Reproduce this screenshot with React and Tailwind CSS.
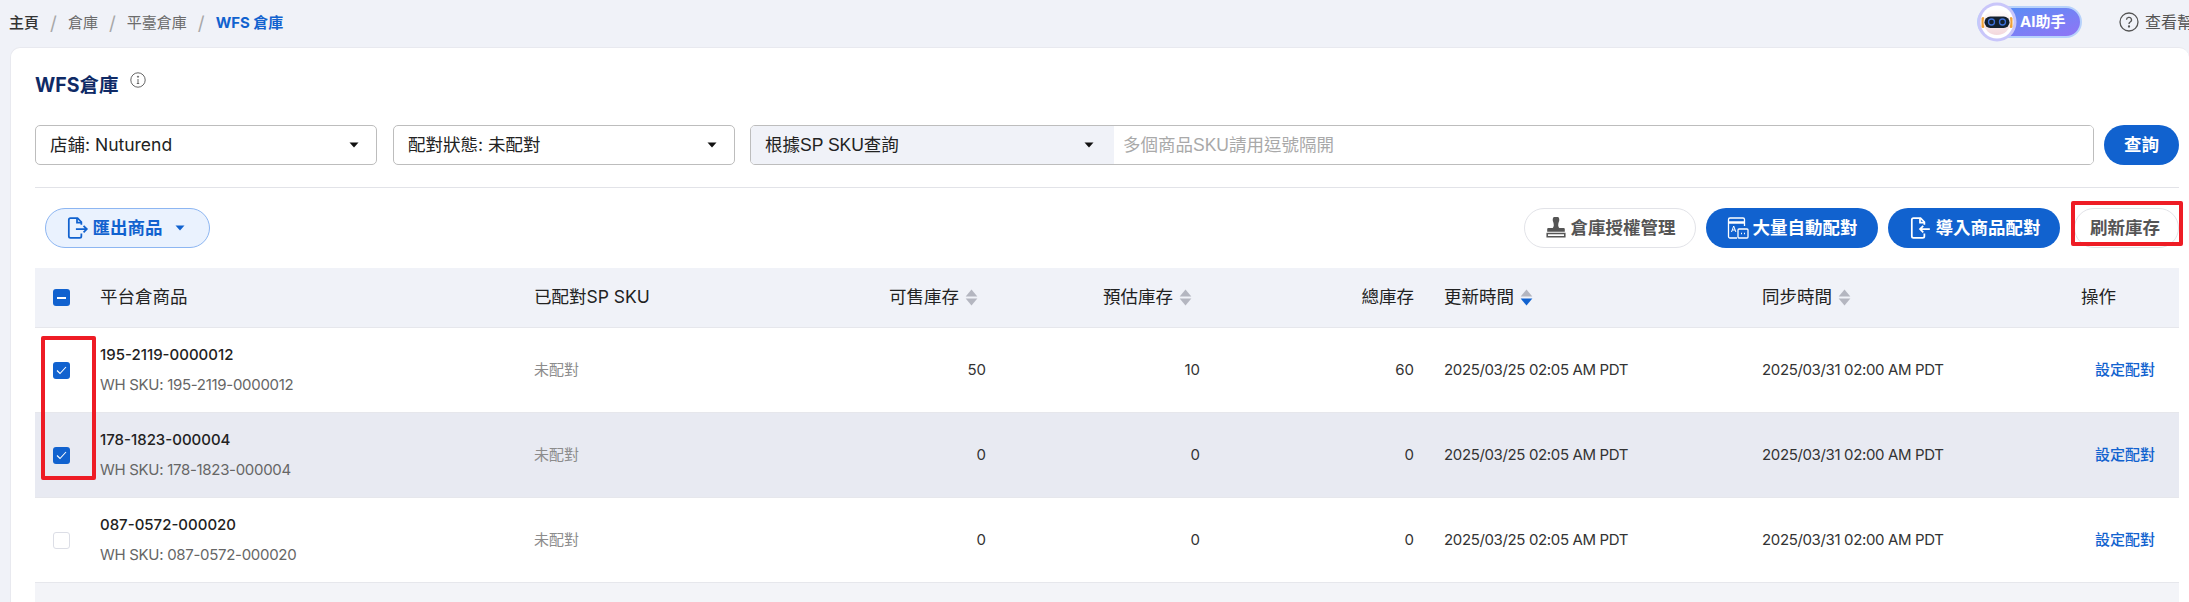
const FONT = "font-['Inter','Noto_Sans_CJK_TC',sans-serif]";

const GRID = "grid grid-cols-[65px_434px_218px_234px_214px_214px_348px_319px_98px] items-center";

function Caret({ className = "" }) {
  return (
    <svg width="10" height="6" viewBox="0 0 10 6" className={className}>
      <path d="M0.5 0.5h9L5 5.5z" fill="currentColor" />
    </svg>
  );
}

function Sort({ active = false }) {
  return (
    <svg width="13" height="17" viewBox="0 0 12 16" className="shrink-0">
      <path d="M6 0.5 11.5 7H.5z" fill="#b4b6c0" />
      <path d="M6 15.5.5 9h11z" fill={active ? "#1162cf" : "#b4b6c0"} />
    </svg>
  );
}

function Select({ label, className = "" }) {
  return (
    <div className={`flex h-10 items-center justify-between rounded-[5px] border border-[#bdbdbd] bg-white pl-3.5 pr-[17px] text-[17.5px] text-[#222] ${className}`}>
      <span>{label}</span>
      <Caret className="text-[#111]" />
    </div>
  );
}

function Box({ state }) {
  if (state === "none") {
    return <div className="h-[17px] w-[17px] rounded-[3px] border border-[#dcdee6] bg-white" />;
  }
  return (
    <div className="flex h-[17px] w-[17px] items-center justify-center rounded-[3px] bg-[#1162cf]">
      {state === "check" ? (
        <svg width="11" height="9" viewBox="0 0 11 9" fill="none">
          <path d="M1 4.5 4 7.5 10 1" stroke="#fff" strokeWidth="1.1" />
        </svg>
      ) : (
        <div className="h-[2px] w-[9px] bg-white" />
      )}
    </div>
  );
}

function ExportIcon({ color = "#1162cf", back = false }) {
  return (
    <svg width="24" height="24" viewBox="0 0 22 22" fill="none" stroke={color} strokeWidth="1.6">
      <path d="M15 8V5.5L11.5 2H5a1.5 1.5 0 0 0-1.500 1.500v15A1.500 1.500 0 0 0 5 20h8.500a1.500 1.500 0 0 0 1.500-1.500V16" />
      <path d="M11 2v4h4" />
      {back ? <path d="M20 12h-9m3-3-3 3 3 3" /> : <path d="M10 12h10m-3-3 3 3-3 3" />}
    </svg>
  );
}

function PillButton({ children, className = "" }) {
  return (
    <button className={`flex h-10 items-center justify-center gap-1 rounded-full text-[17.5px] font-bold ${className}`}>
      {children}
    </button>
  );
}

function Robot() {
  return (
    <svg width="40" height="40" viewBox="0 0 40 40" className="absolute left-[-2px] top-[-6px]">
      <defs>
        <linearGradient id="face" x1="0" y1="0" x2="0" y2="1">
          <stop offset="0" stopColor="#ffffff" />
          <stop offset="1" stopColor="#f3d8dc" />
        </linearGradient>
      </defs>
      <circle cx="20" cy="20" r="19.500" fill="#c9c6fa" />
      <circle cx="20" cy="20" r="16.500" fill="#ffffff" />
      <rect x="4.500" y="15" width="3" height="11" rx="1.500" fill="#f0a23a" />
      <rect x="32.500" y="15" width="3" height="11" rx="1.500" fill="#f0a23a" />
      <ellipse cx="20" cy="20" rx="13.500" ry="13" fill="url(#face)" />
      <rect x="7.500" y="14.500" width="25" height="11.500" rx="5.700" fill="#14202e" />
      <circle cx="14.500" cy="20" r="3" fill="none" stroke="#3d6fd8" strokeWidth="1.300" />
      <circle cx="25.500" cy="20" r="3" fill="none" stroke="#3d6fd8" strokeWidth="1.300" />
    </svg>
  );
}

const rows = [
  { sku: "195-2119-0000012", a: 50, b: 10, c: 60, sync: "2025/03/31 02:00 AM PDT", box: "check" },
  { sku: "178-1823-000004", a: 0, b: 0, c: 0, sync: "2025/03/31 02:00 AM PDT", box: "check", hl: true },
  { sku: "087-0572-000020", a: 0, b: 0, c: 0, sync: "2025/03/31 02:00 AM PDT", box: "none" },
];

function Slash() {
  return <span className="mx-[11px] text-[19px] leading-none text-[#a8a8a8]">/</span>;
}

export default function App() {
  return (
    <div className={`relative h-[602px] w-[2189px] overflow-hidden bg-[#f0f2f8] ${FONT}`}>
      <header className="flex h-[47px] items-center justify-between pl-[9px] text-[15px]">
        <nav className="flex items-center text-[#6b6b6b]">
          <span className="font-medium text-[#333]">主頁</span>
          <Slash />
          <span>倉庫</span>
          <Slash />
          <span>平臺倉庫</span>
          <Slash />
          <span className="font-bold text-[#1162cf]">WFS 倉庫</span>
        </nav>
        <div className="-mt-[3px] flex w-[212px] shrink-0 items-center overflow-visible whitespace-nowrap">
          <div className="relative flex h-8 w-[105px] shrink-0 items-center rounded-full border-2 border-[#b7d2fb] bg-gradient-to-br from-[#4a90f4] to-[#8f74f6] pl-[41px]">
            <Robot />
            <span className="text-[15px] font-bold text-white">AI助手</span>
          </div>
          <svg width="20" height="20" viewBox="0 0 20 20" fill="none" stroke="#555" strokeWidth="1.300" className="ml-[37px] shrink-0">
            <circle cx="10" cy="10" r="9" />
            <path d="M7.500 7.800a2.500 2.500 0 1 1 3.700 2.200c-.8.500-1.200 1-1.200 2" />
            <circle cx="10" cy="14.500" r=".5" fill="#555" />
          </svg>
          <span className="ml-1.5 text-[16px] text-[#555]">查看幫助</span>
        </div>
      </header>

      <main className="ml-[10px] h-[555px] rounded-t-[10px] border-l border-t border-[#e8e9ef] bg-white pl-[24px] pr-[10px]">
        <div className="flex h-[77px] items-start pt-[22px]">
          <h1 className="text-[19.5px] font-bold leading-[30px] text-[#0f2a66]">WFS倉庫</h1>
          <svg width="16" height="16" viewBox="0 0 16 16" fill="none" stroke="#666" className="ml-[12px] mt-[2px]">
            <circle cx="8" cy="8" r="7.200" />
            <path d="M8 7v4.500M6.800 11.500h2.400" />
            <circle cx="8" cy="4.700" r=".6" fill="#666" />
          </svg>
        </div>

        <div className="flex h-10 items-center">
          <Select label="店鋪: Nuturend" className="w-[342px]" />
          <Select label="配對狀態: 未配對" className="ml-4 w-[342px]" />
          <div className="ml-[15px] flex h-10 w-[1344px] overflow-hidden rounded-[5px] border border-[#bdbdbd] text-[17.5px]">
            <div className="flex w-[363px] items-center justify-between bg-[#f0f2f8] pl-3.5 pr-5 font-['Liberation_Sans','Noto_Sans_CJK_TC',sans-serif] text-[#222]">
              <span>根據SP SKU查詢</span>
              <Caret className="text-[#111]" />
            </div>
            <div className="flex flex-1 items-center bg-white pl-[9px] font-['Liberation_Sans','Noto_Sans_CJK_TC',sans-serif] text-[#a9a9a9]">
              多個商品SKU請用逗號隔開
            </div>
          </div>
          <button className="ml-[10px] h-10 w-[75px] rounded-full bg-[#1162cf] text-[17.5px] font-bold text-white">查詢</button>
        </div>

        <div className="mt-[22px] h-px bg-[#e2e3e8]" />

        <div className="mt-[20px] flex h-10 items-center">
          <PillButton className="ml-[10px] w-[165px] border border-[#8db6f2] bg-[#eaf2fe] pr-[6px] text-[#1162cf]">
            <ExportIcon />
            <span>匯出商品</span>
            <Caret className="ml-2" />
          </PillButton>
          <PillButton className="ml-auto w-[172px] border border-[#e2e3e8] bg-white text-[#555]">
            <svg width="22" height="22" viewBox="0 0 20 20" fill="#555">
              <path d="M7 2.500a3 3 0 0 1 6 0c0 1.500-1 2.500-1 5 0 1 .5 2 1 2.500h4a1 1 0 0 1 1 1v2.500H2V11a1 1 0 0 1 1-1h4c.5-.5 1-1.500 1-2.500 0-2.500-1-3.500-1-5z" />
              <path d="M2 15h16v3H2z" fill="none" stroke="#555" strokeWidth="1.400" />
            </svg>
            <span>倉庫授權管理</span>
          </PillButton>
          <PillButton className="ml-2.5 w-[172px] bg-[#1162cf] text-white">
            <svg width="22" height="24" viewBox="0 0 22 24" fill="none" stroke="#fff" strokeWidth="1.300">
              <path d="M10 22H3a1.500 1.500 0 0 1-1.500-1.500v-17A1.500 1.500 0 0 1 3 2h13a1.500 1.500 0 0 1 1.500 1.500V10" />
              <path d="M1.500 6.500h16" strokeWidth="2.500" />
              <path d="M4.500 16l2.200-6 2.200 6M5.300 14h2.800" strokeWidth="1" />
              <rect x="11" y="13" width="10" height="9" rx="1" />
              <path d="M14 17.500h1m2 0h1" strokeWidth="1.600" />
            </svg>
            <span>大量自動配對</span>
          </PillButton>
          <PillButton className="ml-2.5 w-[172px] bg-[#1162cf] text-white">
            <ExportIcon color="#fff" back />
            <span>導入商品配對</span>
          </PillButton>
          <PillButton className="ml-[14px] w-[105px] border border-[#e2e3e8] bg-white pr-[3px] text-[#555]">
            <span>刷新庫存</span>
          </PillButton>
        </div>

        <div className="mt-5">
          <div className={`${GRID} h-[60px] border-b border-[#e6e7ec] bg-[#f0f2f8] text-[17.5px] text-[#222]`}>
            <div className="pl-[18px]"><Box state="minus" /></div>
            <div>平台倉商品</div>
            <div>已配對SP SKU</div>
            <div className="flex items-center justify-end gap-1.5 pr-[8px]"><span>可售庫存</span><Sort /></div>
            <div className="flex items-center justify-end gap-1.5 pr-[8px]"><span>預估庫存</span><Sort /></div>
            <div className="text-right">總庫存</div>
            <div className="flex items-center gap-1.5 pl-[30px]"><span>更新時間</span><Sort active /></div>
            <div className="flex items-center gap-1.5"><span>同步時間</span><Sort /></div>
            <div>操作</div>
          </div>

          {rows.map((r) => (
            <div
              key={r.sku}
              className={`${GRID} h-[85px] border-b border-[#e6e7ec] text-[15px] text-[#333] ${r.hl ? "bg-[#e8eaf2]" : "bg-white"}`}
            >
              <div className="pl-[18px]"><Box state={r.box} /></div>
              <div>
                <div className="font-medium leading-[22px] text-[#222]">{r.sku}</div>
                <div className="mt-2 leading-[22px] tracking-[-0.3px] text-[#666]">WH SKU: {r.sku}</div>
              </div>
              <div className="text-[#8c8c8c]">未配對</div>
              <div className="text-right">{r.a}</div>
              <div className="text-right">{r.b}</div>
              <div className="text-right">{r.c}</div>
              <div className="pl-[30px] tracking-[-0.36px]">2025/03/25 02:05 AM PDT</div>
              <div className="tracking-[-0.36px]">{r.sync}</div>
              <div className="pl-[14px] font-medium text-[#1162cf]">設定配對</div>
            </div>
          ))}
          <div className="h-5 bg-[#f3f4f8]" />
        </div>
      </main>

      <div className="absolute left-[41px] top-[336px] h-[144px] w-[55px] rounded-[2px] border-4 border-[#ee1c25]" />
      <div className="absolute left-[2071px] top-[201px] h-[45px] w-[112px] rounded-[2px] border-4 border-[#ee1c25]" />
    </div>
  );
}
